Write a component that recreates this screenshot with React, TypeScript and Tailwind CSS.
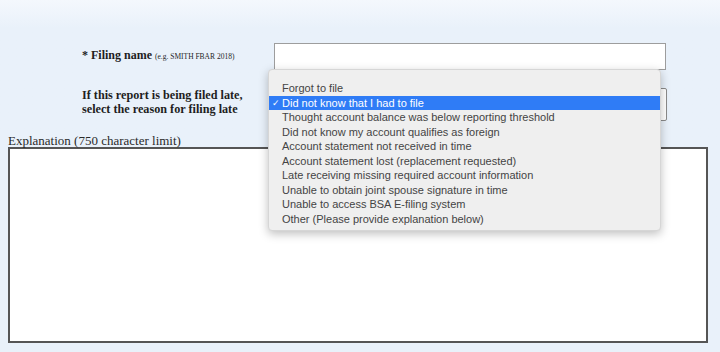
const reasons = [
  "Forgot to file",
  "Did not know that I had to file",
  "Thought account balance was below reporting threshold",
  "Did not know my account qualifies as foreign",
  "Account statement not received in time",
  "Account statement lost (replacement requested)",
  "Late receiving missing required account information",
  "Unable to obtain joint spouse signature in time",
  "Unable to access BSA E-filing system",
  "Other (Please provide explanation below)",
];

const selected = 1;

const ReasonMenu = () => (
  <div className="absolute left-[-7px] top-[-20px] w-[393px] rounded-[4px] bg-[#efefef] pt-[11px] pb-[4px] shadow-[0_3px_10px_rgba(0,0,0,0.25)] border border-[#d6d6d6] font-['Liberation_Sans',Arial,sans-serif] text-[11px] text-[#444] z-10">
    {reasons.map((r, i) => (
      <div
        key={r}
        className={
          i === selected
            ? "relative h-[14.5px] leading-[14.5px] pl-[13px] bg-[#2f7cf6] text-white"
            : "h-[14.5px] leading-[14.5px] pl-[13px]"
        }
      >
        {i === selected && (
          <span className="absolute left-[3px] top-0 text-[9px]">✓</span>
        )}
        {r}
      </div>
    ))}
  </div>
);

export default function App() {
  return (
    <div className="w-[720px] h-[352px] overflow-hidden bg-[#e9f1fa] bg-gradient-to-b from-[#f4f8fd] via-[#e9f1fa] via-[8%] to-[#e9f1fa] font-['Liberation_Serif','Times_New_Roman',serif] text-[#1e1e1e]">
      <div className="flex items-center pt-[43px]">
        <div className="w-[274px] pl-[82px] pb-[4px] text-[12px] font-bold">
          * Filing name{" "}
          <span className="text-[7.5px] font-normal">(e.g. SMITH FBAR 2018)</span>
        </div>
        <div className="w-[392px] h-[27px] border border-[#9d9d9d] bg-white" />
      </div>

      <div className="flex mt-[18px]">
        <div className="w-[274px] pl-[82px] text-[12.2px] font-bold leading-[14px]">
          If this report is being filed late,
          <br />
          select the reason for filing late
        </div>
        <div className="relative w-[393px] h-[33px] border border-[#8a8a8a] rounded-[2px] bg-white">
          <ReasonMenu />
        </div>
      </div>

      <div className="px-[8px] mt-[13px]">
        <div className="text-[13px] leading-[13px] text-[#2a2a2a]">
          Explanation (750 character limit)
        </div>
        <div className="w-[700px] h-[196px] border-2 border-[#555] bg-white" />
      </div>
    </div>
  );
}
